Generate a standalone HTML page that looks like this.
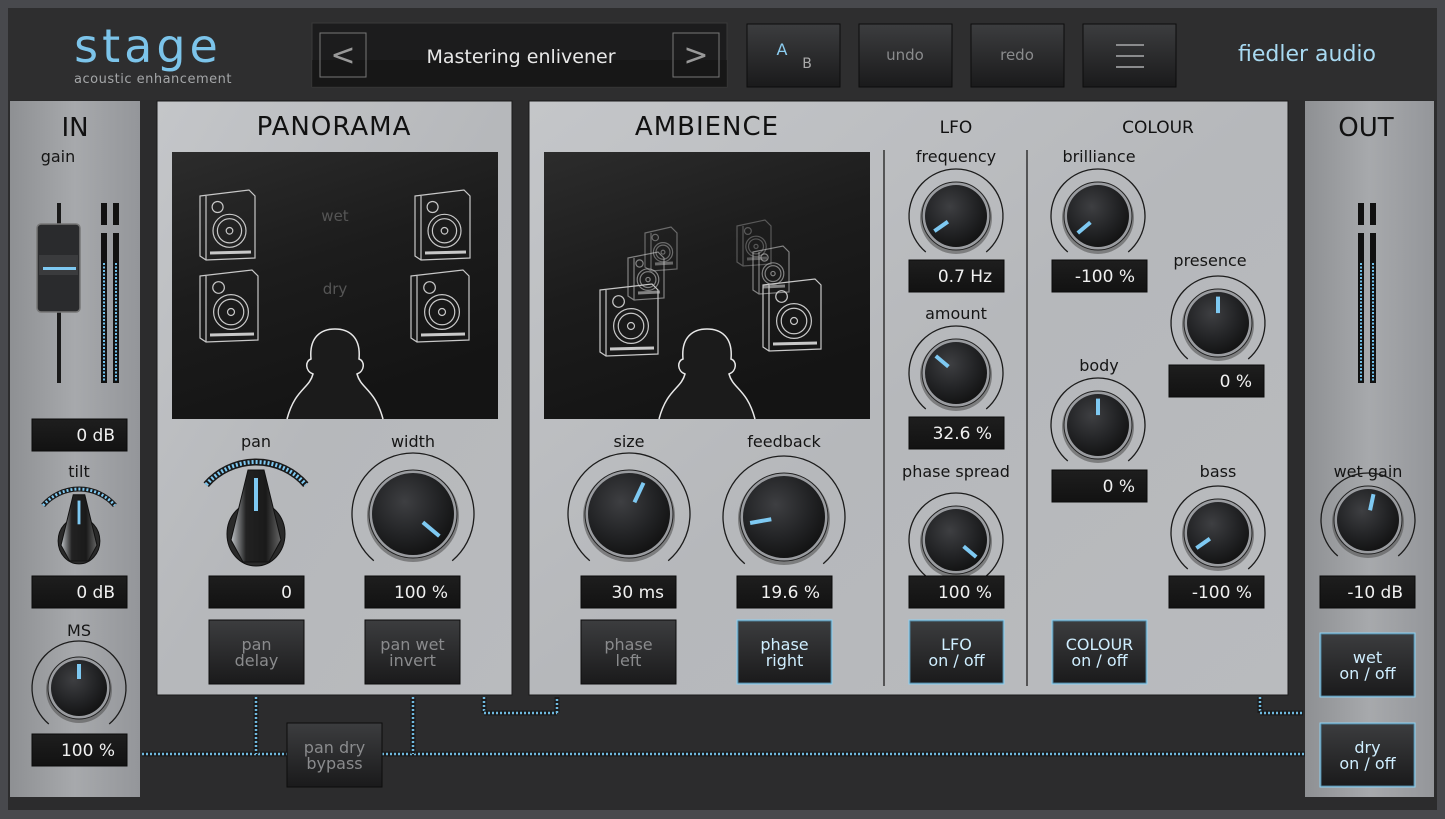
<!DOCTYPE html>
<html><head><meta charset="utf-8"><style>
html,body{margin:0;padding:0;width:1445px;height:819px;overflow:hidden;background:#48494d}
svg{position:absolute;left:0;top:0}
text{font-family:"DejaVu Sans","Liberation Sans",sans-serif}
</style></head><body>
<svg id="s" width="1445" height="819" viewBox="0 0 1445 819">
<defs>
<linearGradient id="panel" x1="0" y1="0" x2="1" y2="1"><stop offset="0" stop-color="#c4c6c9"/><stop offset="0.5" stop-color="#b6b8bb"/><stop offset="1" stop-color="#b9bbbe"/></linearGradient>
<linearGradient id="side" x1="0" y1="0" x2="1" y2="0"><stop offset="0" stop-color="#8e9093"/><stop offset="0.5" stop-color="#a7a9ac"/><stop offset="1" stop-color="#94969a"/></linearGradient>
<linearGradient id="disp" x1="0" y1="0" x2="0.4" y2="1"><stop offset="0" stop-color="#2c2c2c"/><stop offset="0.5" stop-color="#1c1c1c"/><stop offset="1" stop-color="#141414"/></linearGradient>
<linearGradient id="btn" x1="0" y1="0" x2="0" y2="1"><stop offset="0" stop-color="#3c3d3f"/><stop offset="1" stop-color="#1a1a1b"/></linearGradient>
<linearGradient id="val" x1="0" y1="0" x2="0" y2="1"><stop offset="0" stop-color="#1e1e1e"/><stop offset="1" stop-color="#121212"/></linearGradient>
<radialGradient id="kb" cx="0.4" cy="0.35" r="0.7"><stop offset="0" stop-color="#3e3f42"/><stop offset="0.6" stop-color="#222325"/><stop offset="1" stop-color="#111"/></radialGradient>
<linearGradient id="pk" x1="0" y1="0" x2="1" y2="0"><stop offset="0" stop-color="#bfc3c7"/><stop offset="0.3" stop-color="#222"/><stop offset="0.7" stop-color="#1a1a1a"/><stop offset="1" stop-color="#666"/></linearGradient>
</defs>
<rect x="8" y="8" width="1429" height="802" fill="#2c2c2d"/>
<rect x="8" y="8" width="1429" height="92" fill="#2e2e2f"/>
<g id="g"></g>
</svg>
<script>
var o='';
function R(x,y,w,h,f,st){o+='<rect x="'+x+'" y="'+y+'" width="'+w+'" height="'+h+'" fill="'+f+'"'+(st?' stroke="'+st+'"':'')+'/>';}
function T(x,y,t,sz,c,a,extra){o+='<text x="'+x+'" y="'+y+'" font-size="'+sz+'" fill="'+c+'" text-anchor="'+(a||'middle')+'" '+(extra||'')+'>'+t+'</text>';}
function P(a,cx,cy,r){a=a*Math.PI/180;return [cx+r*Math.sin(a),cy-r*Math.cos(a)];}
function knob(cx,cy,r,ar,ang){
 var s=P(-140,cx,cy,ar),e=P(140,cx,cy,ar);
 o+='<path d="M'+s[0]+' '+s[1]+' A'+ar+' '+ar+' 0 1 1 '+e[0]+' '+e[1]+'" fill="none" stroke="#1c1c1c" stroke-width="1.3"/>';
 o+='<circle cx="'+cx+'" cy="'+(cy+2)+'" r="'+(r+3)+'" fill="#555" opacity="0.6"/>';
 o+='<circle cx="'+cx+'" cy="'+cy+'" r="'+(r+1)+'" fill="#9a9ca0" stroke="#222" stroke-width="1"/>';
 o+='<circle cx="'+cx+'" cy="'+cy+'" r="'+(r-2)+'" fill="url(#kb)"/>';
 var a=P(ang,cx,cy,r*0.3),b=P(ang,cx,cy,r*0.8);
 o+='<line x1="'+a[0]+'" y1="'+a[1]+'" x2="'+b[0]+'" y2="'+b[1]+'" stroke="#7ec9f2" stroke-width="4"/>';
}
function pknob(cx,cy,s){
 var ar=66*s,c=cy+23*s,st=P(-49,cx,c,ar),en=P(49,cx,c,ar);
 o+='<path d="M'+st[0]+' '+st[1]+' A'+ar+' '+ar+' 0 0 1 '+en[0]+' '+en[1]+'" fill="none" stroke="#1a1a1a" stroke-width="'+(7*s)+'"/>';
 o+='<path d="M'+st[0]+' '+st[1]+' A'+ar+' '+ar+' 0 0 1 '+en[0]+' '+en[1]+'" fill="none" stroke="#7ec9f2" stroke-width="'+(4*s)+'" stroke-dasharray="2 2"/>';
 o+='<ellipse cx="'+cx+'" cy="'+(cy+29*s)+'" rx="'+(29*s)+'" ry="'+(32*s)+'" fill="#2a2a2a" stroke="#111"/>';
 o+='<path d="M'+(cx-8*s)+' '+(cy-35*s)+' L'+(cx+8*s)+' '+(cy-35*s)+' L'+(cx+25*s)+' '+(cy+35*s)+' L'+(cx+13*s)+' '+(cy+57*s)+' L'+(cx-13*s)+' '+(cy+57*s)+' L'+(cx-25*s)+' '+(cy+35*s)+'Z" fill="url(#pk)" stroke="#111"/>';
 o+='<line x1="'+cx+'" y1="'+(cy-27*s)+'" x2="'+cx+'" y2="'+(cy+6*s)+'" stroke="#7ec9f2" stroke-width="'+(4*s)+'"/>';
}
function val(x,y,t,w){R(x,y,w||95,32,'url(#val)','#0a0a0a');T(x+(w||95)-12,y+22,t,17,'#f0f0f0','end','font-family="DejaVu Sans Mono" xml:space="preserve"');}
function btn(x,y,l1,l2,on,w,h){w=w||95;h=h||64;R(x,y,w,h,'url(#btn)',on?'#8fd0f0':'#0c0c0c');
 if(on)o+='<rect x="'+(x+1)+'" y="'+(y+1)+'" width="'+(w-2)+'" height="'+(h-2)+'" fill="none" stroke="#4f7e96"/>';
 var c=on?'#cfeeff':'#8a8b8d';T(x+w/2,y+h/2-2,l1,16,c);T(x+w/2,y+h/2+14,l2,16,c);}
function spk(x,y,w,h,op){o+='<g opacity="'+(op||1)+'" fill="none" stroke="#c8c8c8" stroke-width="1.2"><path d="M'+x+' '+(y+6)+' L'+(x+w-6)+' '+y+' L'+(x+w)+' '+(y+6)+' L'+(x+w)+' '+(y+h)+' L'+(x+6)+' '+(y+h+2)+' L'+x+' '+(y+h-2)+'Z"/><line x1="'+(x+6)+'" y1="'+(y+6)+'" x2="'+(x+6)+'" y2="'+(y+h+2)+'"/>';
 var cx=x+w/2+2;o+='<circle cx="'+cx+'" cy="'+(y+h*0.6)+'" r="'+(w*0.3)+'"/><circle cx="'+cx+'" cy="'+(y+h*0.6)+'" r="'+(w*0.22)+'"/><circle cx="'+cx+'" cy="'+(y+h*0.6)+'" r="'+(w*0.06)+'"/><circle cx="'+(x+w*0.32)+'" cy="'+(y+h*0.25)+'" r="'+(w*0.1)+'"/><line x1="'+(x+10)+'" y1="'+(y+h-5)+'" x2="'+(x+w-4)+'" y2="'+(y+h-6)+'" stroke-width="3"/></g>';}
function head(cx,by){o+='<path d="M'+(cx-48)+' '+by+' C'+(cx-40)+' '+(by-30)+' '+(cx-26)+' '+(by-30)+' '+(cx-22)+' '+(by-45)+' C'+(cx-30)+' '+(by-48)+' '+(cx-30)+' '+(by-58)+' '+(cx-24)+' '+(by-60)+' C'+(cx-26)+' '+(by-82)+' '+(cx-14)+' '+(by-90)+' '+cx+' '+(by-90)+' C'+(cx+14)+' '+(by-90)+' '+(cx+26)+' '+(by-82)+' '+(cx+24)+' '+(by-60)+' C'+(cx+30)+' '+(by-58)+' '+(cx+30)+' '+(by-48)+' '+(cx+22)+' '+(by-45)+' C'+(cx+26)+' '+(by-30)+' '+(cx+40)+' '+(by-30)+' '+(cx+48)+' '+by+'" fill="#1b1b1b" stroke="#e8e8e8" stroke-width="1.5"/>';}
function meter(x,y1,y2,ys){R(x,y1,6,22,'#111');R(x+12,y1,6,22,'#111');R(x,y1+30,6,y2-y1-30,'#111');R(x+12,y1+30,6,y2-y1-30,'#111');
 o+='<line x1="'+(x+3)+'" y1="'+ys+'" x2="'+(x+3)+'" y2="'+(y2-2)+'" stroke="#6fc0ea" stroke-width="2" stroke-dasharray="2 1.5"/><line x1="'+(x+15)+'" y1="'+ys+'" x2="'+(x+15)+'" y2="'+(y2-2)+'" stroke="#6fc0ea" stroke-width="2" stroke-dasharray="2 1.5"/>';}
function dl(x1,y1,x2,y2){o+='<line x1="'+x1+'" y1="'+y1+'" x2="'+x2+'" y2="'+y2+'" stroke="#1a1a1a" stroke-width="5"/><line x1="'+x1+'" y1="'+y1+'" x2="'+x2+'" y2="'+y2+'" stroke="#6fb8de" stroke-width="2.5" stroke-dasharray="2 2"/>';}

// header
T(148,62,'stage',46,'#7cc4ea','middle','font-family="Liberation Sans" letter-spacing="4"');
T(153,83,'acoustic enhancement',13,'#a4a6a8','middle','letter-spacing="0.5"');
R(312,23,415,64,'#1c1c1d','#3a3a3a');
o+='<rect x="312" y="60" width="415" height="27" fill="#141414" opacity="0.6"/>';
R(320,33,46,44,'none','#777');R(673,33,46,44,'none','#777');
T(343,65,'&lt;',30,'#999','middle','font-family="Liberation Sans"');T(696,65,'&gt;',30,'#999','middle','font-family="Liberation Sans"');
T(521,63,'Mastering enlivener',19,'#e8e8e8','middle','font-family="Liberation Sans"');
[747,859,971,1083].forEach(function(x){R(x,24,93,63,'url(#btn)','#0c0c0c');});
T(782,55,'A',16,'#8ccdf0');T(807,68,'B',14,'#aaa');
T(905,60,'undo',15,'#8a8b8d');T(1017,60,'redo',15,'#8a8b8d');
[45,56,67].forEach(function(y){R(1116,y-1,28,2,'#8a8b8d');});
T(1307,61,'fiedler audio',22,'#a8daf2','middle','font-family="Liberation Sans"');

// panels
R(10,101,130,696,'url(#side)');R(1305,101,129,696,'url(#side)');
R(157,101,355,594,'url(#panel)','#1a1a1a');R(529,101,759,594,'url(#panel)','#1a1a1a');
R(172,152,326,267,'url(#disp)');R(544,152,326,267,'url(#disp)');
o+='<line x1="884" y1="150" x2="884" y2="686" stroke="#333" stroke-width="1.5"/><line x1="1027" y1="150" x2="1027" y2="686" stroke="#333" stroke-width="1.5"/>';
T(75,136,'IN',26,'#111');T(1366,136,'OUT',26,'#111');
T(334,135,'PANORAMA',26,'#111','middle','letter-spacing="1"');T(707,135,'AMBIENCE',26,'#111','middle','letter-spacing="1"');
T(956,133,'LFO',17,'#111');T(1158,133,'COLOUR',17,'#111');
var L=[[58,162,'gain'],[79,477,'tilt'],[79,636,'MS'],[256,447,'pan'],[413,447,'width'],[629,447,'size'],[784,447,'feedback'],[956,162,'frequency'],[956,319,'amount'],[956,477,'phase spread'],[1099,162,'brilliance'],[1210,266,'presence'],[1099,371,'body'],[1218,477,'bass'],[1368,477,'wet gain']];
L.forEach(function(l){T(l[0],l[1],l[2],16,'#151515');});

// displays
spk(200,190,55,68);spk(415,190,55,68);spk(200,270,58,70);spk(411,270,58,70);
T(335,221,'wet',15,'#555');T(335,294,'dry',15,'#555');head(335,419);
spk(737,220,34,44,0.35);spk(645,227,32,42,0.45);spk(628,252,36,46,0.6);spk(753,246,36,46,0.6);
spk(600,284,58,70);spk(763,279,58,70);head(707,419);

// in fader
R(57,203,4,180,'#1a1a1a');
o+='<rect x="37" y="224" width="43" height="88" rx="4" fill="#2a2b2d" stroke="#777" stroke-width="1.5"/><rect x="39" y="255" width="39" height="20" fill="#3a3b3d"/>';
R(43,267,33,3,'#7ec9f2');
meter(101,203,383,263);meter(1358,203,383,263);

// knobs
pknob(256,505,1);pknob(79,520,0.72);
knob(413,514,43,61,130);knob(629,514,43,61,25);knob(784,517,43,61,-100);
knob(956,216,33,47,-125);knob(956,373,33,47,-50);knob(956,540,33,47,130);
knob(1098,216,33,47,-130);knob(1098,425,33,47,0);knob(1218,323,33,47,0);knob(1218,533,33,47,-125);
knob(1368,520,33,47,12);knob(79,688,30,47,0);

// values
val(32,419,'0 dB');val(32,576,'0 dB');val(32,734,'100 %');val(209,576,'0');val(365,576,'100 %');
val(581,576,'30 ms');val(737,576,'19.6 %');val(909,260,'0.7 Hz');val(909,417,'32.6 %');val(909,576,'100 %');
val(1052,260,'-100 %');val(1052,470,'0 %');val(1169,365,'0 %');val(1169,576,'-100 %');val(1320,576,'-10 dB');

// lines
dl(142,754,287,754);dl(382,754,1305,754);dl(256,697,256,754);dl(413,697,413,754);
dl(484,697,484,713);dl(484,713,557,713);dl(557,713,557,697);dl(1260,697,1260,713);dl(1260,713,1303,713);

// buttons
btn(209,620,'pan','delay');btn(365,620,'pan wet','invert');btn(581,620,'phase','left');btn(737,620,'phase','right',1);
btn(909,620,'LFO','on / off',1);btn(1052,620,'COLOUR','on / off',1);btn(1320,633,'wet','on / off',1);btn(1320,723,'dry','on / off',1);
btn(287,723,'pan dry','bypass');
document.getElementById('g').innerHTML=o;
</script>
</body></html>
